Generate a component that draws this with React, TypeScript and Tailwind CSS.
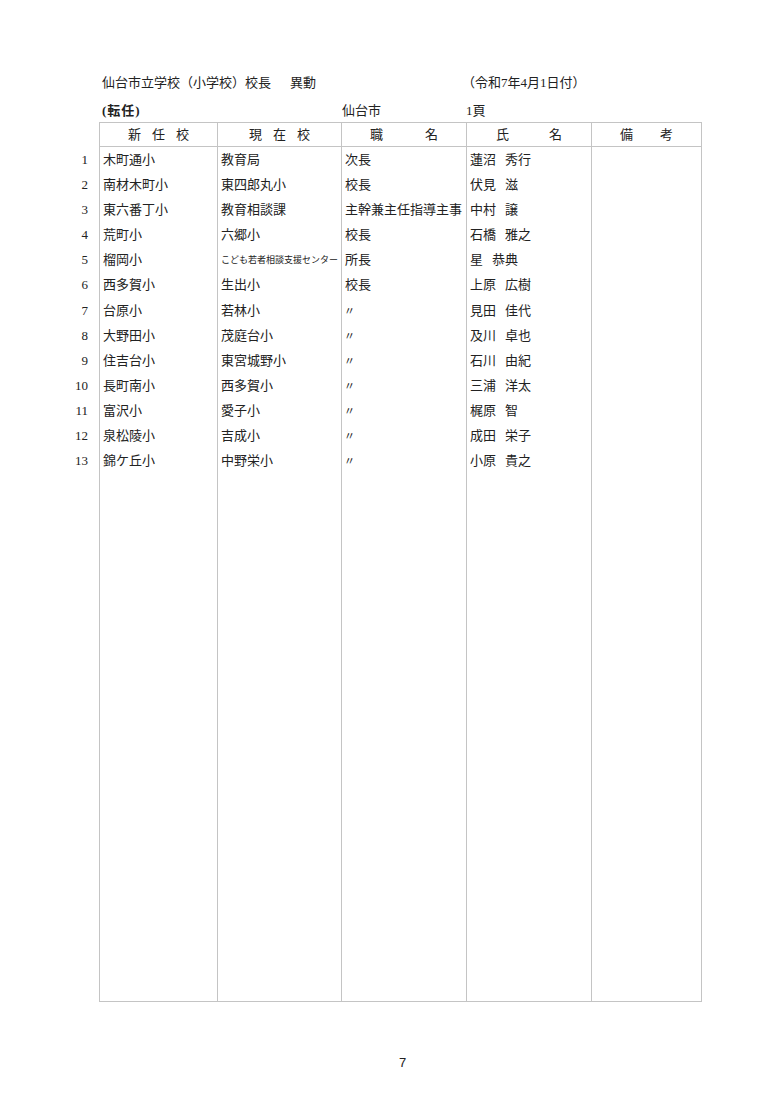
import React from "react";

const rows: [string, string, string, string, string][] = [
  ["木町通小", "教育局", "次長", "蓮沼", "秀行"],
  ["南材木町小", "東四郎丸小", "校長", "伏見", "滋"],
  ["東六番丁小", "教育相談課", "主幹兼主任指導主事", "中村", "譲"],
  ["荒町小", "六郷小", "校長", "石橋", "雅之"],
  ["榴岡小", "こども若者相談支援センター", "所長", "星", "恭典"],
  ["西多賀小", "生出小", "校長", "上原", "広樹"],
  ["台原小", "若林小", "〃", "見田", "佳代"],
  ["大野田小", "茂庭台小", "〃", "及川", "卓也"],
  ["住吉台小", "東宮城野小", "〃", "石川", "由紀"],
  ["長町南小", "西多賀小", "〃", "三浦", "洋太"],
  ["富沢小", "愛子小", "〃", "梶原", "智"],
  ["泉松陵小", "吉成小", "〃", "成田", "栄子"],
  ["錦ケ丘小", "中野栄小", "〃", "小原", "貴之"],
];

function Cell({ children, small }: { children?: React.ReactNode; small?: boolean }) {
  return (
    <div className={"h-[25.17px] flex items-center pl-[3px] whitespace-nowrap " + (small ? "text-[9px]" : "")}>
      {children}
    </div>
  );
}

export default function App() {
  return (
    <div className="w-[780px] h-[1103px] bg-white text-[#222] text-[13px] leading-[18px] font-['Liberation_Serif','Noto_Sans_CJK_JP',serif]">
      <div className="pt-[74px] pl-[102px] flex">
        <span className="w-[188px]">仙台市立学校（小学校）校長</span>
        <span className="w-[172px]">異動</span>
        <span>（令和7年4月1日付）</span>
      </div>
      <div className="mt-[10px] pl-[102px] flex">
        <span className="w-[240px] font-bold tracking-[1px]">(転任)</span>
        <span className="w-[124px]">仙台市</span>
        <span>1頁</span>
      </div>
      <div className="mt-[2px] flex">
        <div className="w-[99px] pt-[25px] pr-[11px] flex flex-col items-end">
          {rows.map((_, i) => (
            <div key={i} className="h-[25.17px] flex items-center">
              {i + 1}
            </div>
          ))}
        </div>
        <div className="w-[603px] border-l border-t border-[#c4c4c4] flex flex-col">
          <div className="grid grid-cols-[118px_124px_125px_125px_110px] h-[24px]">
            <div className="border-r border-b border-[#c4c4c4] flex items-center justify-center gap-[11px]">
              <span>新</span>
              <span>任</span>
              <span>校</span>
            </div>
            <div className="border-r border-b border-[#c4c4c4] flex items-center justify-center gap-[11px]">
              <span>現</span>
              <span>在</span>
              <span>校</span>
            </div>
            <div className="border-r border-b border-[#c4c4c4] flex items-center justify-center gap-[42px]">
              <span>職</span>
              <span>名</span>
            </div>
            <div className="border-r border-b border-[#c4c4c4] flex items-center justify-center gap-[40px]">
              <span>氏</span>
              <span>名</span>
            </div>
            <div className="border-r border-b border-[#c4c4c4] flex items-center justify-center gap-[27px]">
              <span>備</span>
              <span>考</span>
            </div>
          </div>
          <div className="grid grid-cols-[118px_124px_125px_125px_110px] h-[855px] border-b border-[#c4c4c4]">
            <div className="border-r border-[#c4c4c4]">
              {rows.map((r, i) => (
                <Cell key={i}>{r[0]}</Cell>
              ))}
            </div>
            <div className="border-r border-[#c4c4c4]">
              {rows.map((r, i) => (
                <Cell key={i} small={r[1].length > 8}>
                  {r[1]}
                </Cell>
              ))}
            </div>
            <div className="border-r border-[#c4c4c4]">
              {rows.map((r, i) =>
                r[2] === "〃" ? (
                  <div key={i} className="h-[25.17px] flex items-center pl-[2px] text-[11px]">
                    〃
                  </div>
                ) : (
                  <Cell key={i}>{r[2]}</Cell>
                )
              )}
            </div>
            <div className="border-r border-[#c4c4c4]">
              {rows.map((r, i) => (
                <Cell key={i}>
                  <span>{r[3]}</span>
                  <span className="ml-[9px]">{r[4]}</span>
                </Cell>
              ))}
            </div>
            <div className="border-r border-[#c4c4c4]"></div>
          </div>
        </div>
      </div>
      <div className="mt-[52px] pl-[399px] font-['Liberation_Sans',sans-serif] text-[13px]">7</div>
    </div>
  );
}
